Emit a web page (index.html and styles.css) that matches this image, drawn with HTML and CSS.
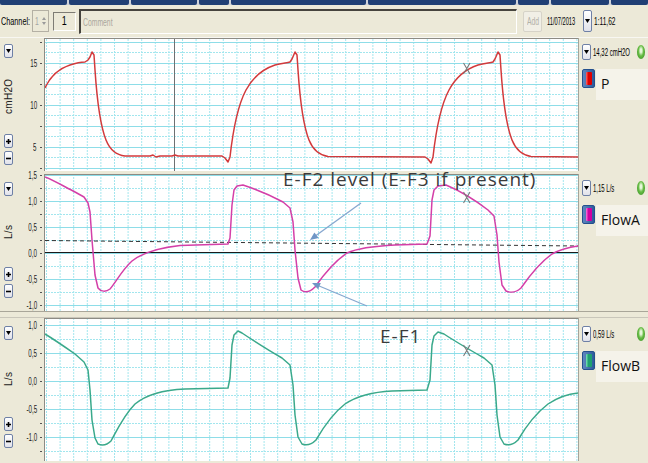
FILE: index.html
```html
<!DOCTYPE html>
<html>
<head>
<meta charset="utf-8">
<title>Waveforms</title>
<link rel="stylesheet" href="styles.css">
</head>
<body>
<div class="app">
  <div class="tabs"><span class="tab"></span><span class="tab"></span><span class="tab"></span><span class="tab"></span><span class="tab"></span><span class="tab"></span><span class="tab"></span><span class="tab"></span><span class="tab"></span></div>

  <div class="toolbar">
    <span class="ch"><span class="sq">Channel:</span></span>
    <span class="spin"><span class="sq spin-val">1</span><span class="spin-arr"><svg width="4" height="10" viewBox="0 0 4 10"><path d="M0 4 L2 1 L4 4Z M0 6 L2 9 L4 6Z" fill="#9a9a9a"/></svg></span></span>
    <span class="numbox"><span class="sq">1</span></span>
    <span class="comment"><span class="sq">Comment</span></span>
    <span class="add"><span class="sq">Add</span></span>
    <span class="date"><span class="sq">11/07/2013</span></span>
    <span class="btn dd-top"><svg width="5" height="4" viewBox="0 0 5 4"><path d="M0 0H5L2.5 4Z" fill="#000"/></svg></span>
    <span class="time"><span class="sq">1:11,62</span></span>
  </div>

  <div class="panel p1">
    <div class="axis">
      <span class="btn"><svg width="5" height="4" viewBox="0 0 5 4"><path d="M0 0H5L2.5 4Z" fill="#000"/></svg></span>
      <span class="unit">cmH2O</span>
      <span class="btn"><svg width="5" height="5" viewBox="0 0 5 5"><path d="M2.5 0V5M0 2.5H5" stroke="#000" stroke-width="1.6"/></svg></span>
      <span class="btn btn-last"><svg width="5" height="5" viewBox="0 0 5 5"><path d="M0 2.5H5" stroke="#000" stroke-width="1.6"/></svg></span>
      <span class="tick" style="top:4.5px"><i></i></span>
      <span class="tick" style="top:25.5px"><b>15</b><i></i></span>
      <span class="tick" style="top:46.5px"><i></i></span>
      <span class="tick" style="top:67.5px"><b>10</b><i></i></span>
      <span class="tick" style="top:88.5px"><i></i></span>
      <span class="tick" style="top:109.5px"><b>5</b><i></i></span>
      <span class="tick" style="top:130.5px"><i></i></span>
    </div>
    <div class="plot">
      <svg width="533" height="132" viewBox="45 39 533 132">
        <defs>
          <pattern id="a-v" x="46" y="0" width="13.6" height="3" patternUnits="userSpaceOnUse"><rect width="1" height="2" fill="#a2e6ee"/></pattern>
          <pattern id="a-h" x="0" y="0" width="10" height="21" patternUnits="userSpaceOnUse"><rect width="10" height="1" fill="#8edde8"/></pattern>
          <pattern id="a-d" x="0" y="0" width="3" height="21" patternUnits="userSpaceOnUse"><rect y="10" width="2" height="1" fill="#a2e6ee"/></pattern>
        </defs>
        <rect x="45" y="39" width="533" height="132" fill="url(#a-v)"/>
        <rect x="45" y="39" width="533" height="132" fill="url(#a-d)"/>
        <rect x="45" y="39" width="533" height="132" fill="url(#a-h)"/>
        <line x1="174.5" y1="39" x2="174.5" y2="171" stroke="#6e7072" stroke-width="1"/>
        <path class="trace red" d="M45,88 C50,77 58,69 70,65 C76,63 81,62 85,62 L88,60 L90,57 L92,52 L94,55 L95,70 C97,100 100,125 106,140 C110,150 116,155 125,156 L150,156 L153,155 L156,157 L160,156 L172,156 L175,155 L178,156 L222,156 L225,158 L228,162 L230,157 C233,130 238,105 246,90 C253,77 263,69 275,65 C282,63 287,63 290,62 L292,59 L295,52 L297,55 L298,70 C300,100 303,125 309,140 C313,150 319,155 328,156.5 L425,157 L428,159 L431,163 L433,157 C436,130 441,105 449,90 C456,77 466,69 478,65 C485,63 490,63 493,62 L495,59 L498,52 L500,55 L501,70 C503,100 506,125 512,140 C516,150 522,155 531,156.5 L578,157"/>
        <path class="mark" d="M463.5,63 L470,74 M470,63 L463.5,74"/>
      </svg>
    </div>
    <div class="legend">
      <div class="lg-top">
        <span class="btn lg-btn"><svg width="5" height="4" viewBox="0 0 5 4"><path d="M0 0H5L2.5 4Z" fill="#000"/></svg></span>
        <span class="lg-val"><span class="sq">14,32 cmH2O</span></span>
        <span class="led"></span>
      </div>
      <div class="lg-name">
        <span class="swatch"><span class="sw-in sw-red"></span></span>
        <span class="name">P</span>
      </div>
    </div>
  </div>

  <div class="sep sep1"></div>

  <div class="panel p2">
    <div class="axis">
      <span class="btn"><svg width="5" height="4" viewBox="0 0 5 4"><path d="M0 0H5L2.5 4Z" fill="#000"/></svg></span>
      <span class="unit">L/s</span>
      <span class="btn"><svg width="5" height="5" viewBox="0 0 5 5"><path d="M2.5 0V5M0 2.5H5" stroke="#000" stroke-width="1.6"/></svg></span>
      <span class="btn btn-last"><svg width="5" height="5" viewBox="0 0 5 5"><path d="M0 2.5H5" stroke="#000" stroke-width="1.6"/></svg></span>
      <span class="tick" style="top:1.5px"><b>1,5</b><i></i></span>
      <span class="tick" style="top:14.5px"><i></i></span>
      <span class="tick" style="top:27.5px"><b>1,0</b><i></i></span>
      <span class="tick" style="top:40.5px"><i></i></span>
      <span class="tick" style="top:53.5px"><b>0,5</b><i></i></span>
      <span class="tick" style="top:66.5px"><i></i></span>
      <span class="tick" style="top:79.5px"><b>0,0</b><i></i></span>
      <span class="tick" style="top:92.5px"><i></i></span>
      <span class="tick" style="top:105.5px"><b>-0,5</b><i></i></span>
      <span class="tick" style="top:118.5px"><i></i></span>
      <span class="tick" style="top:131.5px"><b>-1,0</b><i></i></span>
    </div>
    <div class="plot">
      <svg width="533" height="136" viewBox="45 175 533 136">
        <defs>
          <pattern id="b-v" x="46" y="0" width="13.6" height="3" patternUnits="userSpaceOnUse"><rect width="1" height="2" fill="#a2e6ee"/></pattern>
          <pattern id="b-h" x="0" y="19" width="10" height="26" patternUnits="userSpaceOnUse"><rect width="10" height="1" fill="#8edde8"/></pattern>
          <pattern id="b-d" x="0" y="19" width="3" height="26" patternUnits="userSpaceOnUse"><rect y="13" width="2" height="1" fill="#a2e6ee"/></pattern>
        </defs>
        <rect x="45" y="175" width="533" height="136" fill="url(#b-v)"/>
        <rect x="45" y="175" width="533" height="136" fill="url(#b-d)"/>
        <rect x="45" y="175" width="533" height="136" fill="url(#b-h)"/>
        <line x1="45" y1="252.5" x2="578" y2="252.5" stroke="#1a1a1a" stroke-width="1"/>
        <line x1="45" y1="240.5" x2="578" y2="246" stroke="#333" stroke-width="1" stroke-dasharray="4 3"/>
        <path class="trace mag" d="M45,177 C55,181 65,187 75,192 L84,197 L88,203 L90,212 L92,240 L95,275 L98,288 C101,292 106,292 110,289 C116,282 122,270 132,261 C142,253 158,248 180,245.5 L228,244 L230,238 L232,205 L234,190 L237,186 L243,185 C255,189 270,195 283,202 L290,208 L293,222 L295,250 L298,278 L301,290 C305,293 310,292 315,287 C322,277 332,263 347,253 C358,248 375,246 395,245 L427,244 L430,236 L432,200 L434,190 L438,186 L446,185 C458,190 475,200 488,210 L494,216 L497,235 L499,262 L502,285 L506,291 C511,293 517,292 521,288 C528,278 538,264 552,254 C561,249 570,247 578,246"/>
        <path class="mark" d="M463.5,192 L470,203 M470,192 L463.5,203"/>
      </svg>
    </div>
    <div class="legend">
      <div class="lg-top">
        <span class="btn lg-btn"><svg width="5" height="4" viewBox="0 0 5 4"><path d="M0 0H5L2.5 4Z" fill="#000"/></svg></span>
        <span class="lg-val"><span class="sq">1,15 L/s</span></span>
        <span class="led"></span>
      </div>
      <div class="lg-name">
        <span class="swatch"><span class="sw-in sw-mag"></span></span>
        <span class="name">FlowA</span>
      </div>
    </div>
  </div>

  <div class="sep sep2"></div>

  <div class="panel p3">
    <div class="axis">
      <span class="btn"><svg width="5" height="4" viewBox="0 0 5 4"><path d="M0 0H5L2.5 4Z" fill="#000"/></svg></span>
      <span class="unit">L/s</span>
      <span class="btn"><svg width="5" height="5" viewBox="0 0 5 5"><path d="M2.5 0V5M0 2.5H5" stroke="#000" stroke-width="1.6"/></svg></span>
      <span class="btn btn-last"><svg width="5" height="5" viewBox="0 0 5 5"><path d="M0 2.5H5" stroke="#000" stroke-width="1.6"/></svg></span>
      <span class="tick" style="top:7.5px"><b>1,0</b><i></i></span>
      <span class="tick" style="top:21.5px"><i></i></span>
      <span class="tick" style="top:35.5px"><b>0,5</b><i></i></span>
      <span class="tick" style="top:49.5px"><i></i></span>
      <span class="tick" style="top:63.5px"><b>0,0</b><i></i></span>
      <span class="tick" style="top:77.5px"><i></i></span>
      <span class="tick" style="top:91.5px"><b>-0,5</b><i></i></span>
      <span class="tick" style="top:105.5px"><i></i></span>
      <span class="tick" style="top:119.5px"><b>-1,0</b><i></i></span>
      <span class="tick" style="top:133.5px"><i></i></span>
    </div>
    <div class="plot">
      <svg width="533" height="142" viewBox="45 319 533 142">
        <defs>
          <pattern id="c-v" x="46" y="0" width="13.6" height="3" patternUnits="userSpaceOnUse"><rect width="1" height="2" fill="#a2e6ee"/></pattern>
          <pattern id="c-h" x="0" y="17" width="10" height="28" patternUnits="userSpaceOnUse"><rect width="10" height="1" fill="#8edde8"/></pattern>
          <pattern id="c-d" x="0" y="17" width="3" height="28" patternUnits="userSpaceOnUse"><rect y="14" width="2" height="1" fill="#a2e6ee"/></pattern>
        </defs>
        <rect x="45" y="319" width="533" height="142" fill="url(#c-v)"/>
        <rect x="45" y="319" width="533" height="142" fill="url(#c-d)"/>
        <rect x="45" y="319" width="533" height="142" fill="url(#c-h)"/>
        <path class="trace teal" d="M45,334 C55,340 65,347 75,354 L84,362 L88,370 L90,390 L92,420 L95,438 L98,444 C103,446 107,445 111,441 C117,430 124,415 135,404 C147,394 163,390 185,389 L228,388 L230,378 L232,345 L234,335 L238,331 L242,333 C254,341 268,350 282,358 L290,365 L293,385 L295,415 L298,437 L302,444 C307,446 311,445 316,440 C323,428 332,414 345,404 C357,396 372,392 392,391 L427,390 L430,380 L432,345 L434,336 L438,332 L444,334 C456,342 470,350 484,358 L492,365 L495,385 L497,415 L500,437 L504,444 C509,446 513,445 518,440 C525,428 535,414 548,404 C557,398 567,394 578,393"/>
        <path class="mark" d="M463.5,345 L470,356 M470,345 L463.5,356"/>
      </svg>
    </div>
    <div class="legend">
      <div class="lg-top">
        <span class="btn lg-btn"><svg width="5" height="4" viewBox="0 0 5 4"><path d="M0 0H5L2.5 4Z" fill="#000"/></svg></span>
        <span class="lg-val"><span class="sq">0,59 L/s</span></span>
        <span class="led"></span>
      </div>
      <div class="lg-name">
        <span class="swatch"><span class="sw-in sw-teal"></span></span>
        <span class="name">FlowB</span>
      </div>
    </div>
  </div>
  <div class="sep sep3"></div>
</div>

<svg class="arrows" width="648" height="463" viewBox="0 0 648 463">
  <line x1="361" y1="203" x2="316" y2="235.5" stroke="#86a7cf" stroke-width="1.3"/>
  <polygon points="310,240 314.4,232.5 318.6,238.1" fill="#6f96c6"/>
  <line x1="367" y1="306" x2="318" y2="285.5" stroke="#86a7cf" stroke-width="1.3"/>
  <polygon points="312,283 320.8,282.9 318.1,289.3" fill="#6f96c6"/>
</svg>
<div class="ann ann-f2">E-F2 level (E-F3 if present)</div>
<div class="ann ann-f1">E-F1</div>
</body>
</html>
```

FILE: styles.css
```css
* { box-sizing: border-box; margin: 0; padding: 0; }
html, body { width: 648px; height: 463px; overflow: hidden; background: #ece9d8; }
body { position: relative; font-family: "Liberation Sans", Arial, sans-serif; font-size: 10px; color: #000; }

.app { display: flex; flex-direction: column; width: 648px; height: 463px; }

.sq { display: inline-block; white-space: nowrap; transform: scaleX(.62); transform-origin: left center; }

/* top tabs */
.tabs { height: 5px; display: flex; gap: 2px; background: #cfd3da; flex: none; }
.tab { height: 5px; background: #203f74; border-radius: 0 0 2px 2px; }
.tab:nth-child(1) { width: 67px; }
.tab:nth-child(2) { width: 60px; }
.tab:nth-child(3) { width: 66px; }
.tab:nth-child(4) { width: 30px; }
.tab:nth-child(5) { width: 135px; }
.tab:nth-child(6) { width: 148px; }
.tab:nth-child(7) { width: 31px; }
.tab:nth-child(8) { width: 58px; }
.tab:nth-child(9) { flex: 1; }

/* toolbar */
.toolbar { height: 33px; flex: none; display: flex; align-items: center; border-bottom: 1px solid #f8f7f2; }
.ch { width: 31px; margin-left: 1px; font-size: 11px; }
.ch .sq { transform: scaleX(.66); }
.spin { width: 17px; height: 22px; border: 1px solid #b4b0a4; display: flex; align-items: center; justify-content: space-between; padding: 0 2px 0 2px; }
.spin-val { color: #a4a4a4; font-size: 11px; }
.spin-arr { display: flex; }
.numbox { margin-left: 4px; width: 23px; height: 19px; border-top: 1px solid #7e7c74; border-left: 1px solid #7e7c74; border-right: 1px solid #fff; border-bottom: 1px solid #fff; display: flex; align-items: center; justify-content: center; font-size: 12px; }
.numbox .sq { transform: scaleX(.75); transform-origin: center; }
.comment { margin-left: 3px; width: 438px; height: 25px; border-top: 2px solid #46443e; border-left: 2px solid #46443e; border-right: 1px solid #fff; border-bottom: 1px solid #fff; display: flex; align-items: center; padding-left: 2px; color: #aaa79c; font-size: 11px; }
.add { margin-left: 6px; width: 19px; height: 21px; border: 1px solid #d6d3c8; border-radius: 2px; background: #f1efe6; display: flex; align-items: center; padding-left: 3px; color: #b3b1a8; font-size: 11px; }
.date { margin-left: 5px; width: 31px; font-size: 11px; }
.date .sq { transform: scaleX(.52); }
.btn { width: 9px; height: 15px; border: 1px solid #6e80a6; border-radius: 2px; background: linear-gradient(#ffffff, #e1e2ea); display: flex; align-items: center; justify-content: center; flex: none; }
.dd-top { margin-left: 5px; height: 22px; }
.time { margin-left: 2px; font-size: 11px; }
.time .sq { transform: scaleX(.6); }

/* panels */
.panel { display: grid; grid-template-columns: 44px 534px 70px; flex: none; }
.p1 { height: 133px; }
.p2 { height: 137px; }
.p3 { height: 143px; }
.sep { flex: none; background: #ece9d8; }
.sep1 { height: 3px; }
.sep2 { height: 7px; border-top: 1px solid #a9a699; border-bottom: 1px solid #c9c6ba; }
.sep3 { flex: 1; }

.axis { position: relative; display: flex; flex-direction: column; align-items: flex-start; padding-left: 4px; }
.p1 .axis { padding-top: 6px; padding-bottom: 6px; }
.p2 .axis { padding-top: 8px; padding-bottom: 13px; }
.p3 .axis { padding-top: 8px; padding-bottom: 13px; }
.axis .btn { height: 14px; }
.axis .btn-last { margin-top: 3px; }
.unit { flex: 1; display: flex; align-items: center; justify-content: center; writing-mode: vertical-rl; transform: rotate(180deg); width: 11px; margin-left: -1px; font-size: 10px; letter-spacing: .3px; color: #222; }

.tick { position: absolute; left: 0; width: 44px; height: 10px; margin-top: -5px; display: flex; align-items: center; justify-content: flex-end; padding-right: 2px; }
.tick b { font-weight: normal; font-size: 10px; color: #222; display: inline-block; transform: scaleX(.62); transform-origin: right center; margin-right: 3px; white-space: nowrap; }
.tick i { width: 2px; height: 1px; background: #555; }

.plot { border-left: 1px solid #8d8b84; border-top: 1px solid #8d8b84; background: #fff; overflow: hidden; }
.plot svg { display: block; }
.trace { fill: none; stroke-width: 1.5; stroke-linejoin: round; }
.red { stroke: #d33a3c; }
.mag { stroke: #d43fa8; }
.teal { stroke: #3aa98b; }
.mark { fill: none; stroke: #7a7a7a; stroke-width: 1.1; }

/* legend */
.legend { border-left: 1px solid #a6a398; padding: 6px 0 0 3px; }
.p3 .legend { padding-top: 8px; }
.lg-top { display: flex; align-items: center; height: 16px; }
.lg-btn { height: 16px; }
.lg-val { margin-left: 2px; width: 40px; font-size: 10px; }
.lg-val .sq { transform: scaleX(.6); }
.led { margin-left: auto; margin-right: 3px; width: 8px; height: 14px; border-radius: 50%; background: radial-gradient(ellipse at 50% 40%, #e6f7da 0 16%, #68bd45 45%, #2c861d 100%); }
.lg-name { display: flex; margin-top: 9px; }
.swatch { width: 13px; height: 19px; border: 1px solid #24508e; border-radius: 2px; background: linear-gradient(90deg, #5f86bf, #2d5b9c); padding: 2px 2px 2px 3px; display: flex; }
.sw-in { flex: 1; border-radius: 1px; }
.sw-red { background: linear-gradient(90deg, #ff6a6a, #e00000 40%); }
.sw-mag { background: linear-gradient(90deg, #ff77e0, #d000a0 40%); }
.sw-teal { background: linear-gradient(90deg, #7ee8b8, #1fa070 40%); }
.name { flex: 1; height: 31px; margin-left: 1px; background: #f5f3ea; font-family: "Open Sans", "DejaVu Sans", sans-serif; font-size: 14px; color: #111; padding: 5px 0 0 5px; line-height: 20px; }

/* annotations */
.arrows { position: absolute; left: 0; top: 0; pointer-events: none; }
.ann { position: absolute; font-family: "Open Sans", "DejaVu Sans", sans-serif; font-size: 19px; line-height: 20px; color: #3b3b3b; white-space: nowrap; letter-spacing: 1px; }
.ann-f2 { left: 283px; top: 169px; }
.ann-f1 { left: 380px; top: 326px; }
```
